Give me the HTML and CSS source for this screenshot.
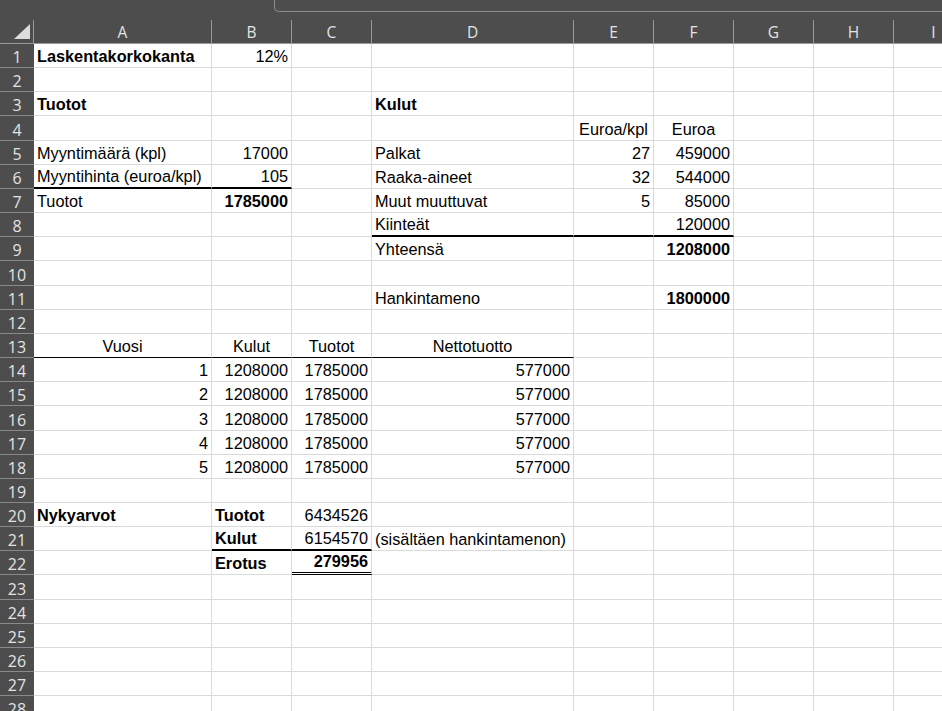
FILE: index.html
```html
<!DOCTYPE html>
<html lang="fi">
<head>
<meta charset="utf-8">
<title>Laskenta</title>
<link rel="stylesheet" href="styles.css">
</head>
<body>
<div class="topbar"><div class="namebox"></div></div>
<div class="sheet">
  <div class="corner"><svg width="34" height="23" viewBox="0 0 34 23"><polygon points="14,19 30,19 30,4" fill="#dcdcdc"/></svg></div>
  <div class="ch">A</div><div class="ch">B</div><div class="ch">C</div><div class="ch">D</div><div class="ch">E</div><div class="ch">F</div><div class="ch">G</div><div class="ch">H</div><div class="ch">I</div>

  <div class="h">1</div><div class="c b">Laskentakorkokanta</div><div class="c n">12%</div><div class="c"></div><div class="c"></div><div class="c"></div><div class="c"></div><div class="c"></div><div class="c"></div><div class="c"></div>
  <div class="h">2</div><div class="c"></div><div class="c"></div><div class="c"></div><div class="c"></div><div class="c"></div><div class="c"></div><div class="c"></div><div class="c"></div><div class="c"></div>
  <div class="h">3</div><div class="c b">Tuotot</div><div class="c"></div><div class="c"></div><div class="c b">Kulut</div><div class="c"></div><div class="c"></div><div class="c"></div><div class="c"></div><div class="c"></div>
  <div class="h">4</div><div class="c"></div><div class="c"></div><div class="c"></div><div class="c"></div><div class="c m">Euroa/kpl</div><div class="c m">Euroa</div><div class="c"></div><div class="c"></div><div class="c"></div>
  <div class="h">5</div><div class="c">Myyntimäärä (kpl)</div><div class="c n">17000</div><div class="c"></div><div class="c">Palkat</div><div class="c n">27</div><div class="c n">459000</div><div class="c"></div><div class="c"></div><div class="c"></div>
  <div class="h">6</div><div class="c tk">Myyntihinta (euroa/kpl)</div><div class="c n tk">105</div><div class="c"></div><div class="c">Raaka-aineet</div><div class="c n">32</div><div class="c n">544000</div><div class="c"></div><div class="c"></div><div class="c"></div>
  <div class="h">7</div><div class="c">Tuotot</div><div class="c n b">1785000</div><div class="c"></div><div class="c">Muut muuttuvat</div><div class="c n">5</div><div class="c n">85000</div><div class="c"></div><div class="c"></div><div class="c"></div>
  <div class="h">8</div><div class="c"></div><div class="c"></div><div class="c"></div><div class="c tk">Kiinteät</div><div class="c tk"></div><div class="c n tk">120000</div><div class="c"></div><div class="c"></div><div class="c"></div>
  <div class="h">9</div><div class="c"></div><div class="c"></div><div class="c"></div><div class="c">Yhteensä</div><div class="c"></div><div class="c n b">1208000</div><div class="c"></div><div class="c"></div><div class="c"></div>
  <div class="h">10</div><div class="c"></div><div class="c"></div><div class="c"></div><div class="c"></div><div class="c"></div><div class="c"></div><div class="c"></div><div class="c"></div><div class="c"></div>
  <div class="h">11</div><div class="c"></div><div class="c"></div><div class="c"></div><div class="c">Hankintameno</div><div class="c"></div><div class="c n b">1800000</div><div class="c"></div><div class="c"></div><div class="c"></div>
  <div class="h">12</div><div class="c"></div><div class="c"></div><div class="c"></div><div class="c"></div><div class="c"></div><div class="c"></div><div class="c"></div><div class="c"></div><div class="c"></div>
  <div class="h">13</div><div class="c m bl">Vuosi</div><div class="c m bl">Kulut</div><div class="c m bl">Tuotot</div><div class="c m bl">Nettotuotto</div><div class="c"></div><div class="c"></div><div class="c"></div><div class="c"></div><div class="c"></div>
  <div class="h">14</div><div class="c n">1</div><div class="c n">1208000</div><div class="c n">1785000</div><div class="c n">577000</div><div class="c"></div><div class="c"></div><div class="c"></div><div class="c"></div><div class="c"></div>
  <div class="h">15</div><div class="c n">2</div><div class="c n">1208000</div><div class="c n">1785000</div><div class="c n">577000</div><div class="c"></div><div class="c"></div><div class="c"></div><div class="c"></div><div class="c"></div>
  <div class="h">16</div><div class="c n">3</div><div class="c n">1208000</div><div class="c n">1785000</div><div class="c n">577000</div><div class="c"></div><div class="c"></div><div class="c"></div><div class="c"></div><div class="c"></div>
  <div class="h">17</div><div class="c n">4</div><div class="c n">1208000</div><div class="c n">1785000</div><div class="c n">577000</div><div class="c"></div><div class="c"></div><div class="c"></div><div class="c"></div><div class="c"></div>
  <div class="h">18</div><div class="c n">5</div><div class="c n">1208000</div><div class="c n">1785000</div><div class="c n">577000</div><div class="c"></div><div class="c"></div><div class="c"></div><div class="c"></div><div class="c"></div>
  <div class="h">19</div><div class="c"></div><div class="c"></div><div class="c"></div><div class="c"></div><div class="c"></div><div class="c"></div><div class="c"></div><div class="c"></div><div class="c"></div>
  <div class="h">20</div><div class="c b">Nykyarvot</div><div class="c b">Tuotot</div><div class="c n">6434526</div><div class="c"></div><div class="c"></div><div class="c"></div><div class="c"></div><div class="c"></div><div class="c"></div>
  <div class="h">21</div><div class="c"></div><div class="c b tk">Kulut</div><div class="c n tk">6154570</div><div class="c">(sisältäen hankintamenon)</div><div class="c"></div><div class="c"></div><div class="c"></div><div class="c"></div><div class="c"></div>
  <div class="h">22</div><div class="c"></div><div class="c b">Erotus</div><div class="c n b dbl">279956</div><div class="c"></div><div class="c"></div><div class="c"></div><div class="c"></div><div class="c"></div><div class="c"></div>
  <div class="h">23</div><div class="c"></div><div class="c"></div><div class="c"></div><div class="c"></div><div class="c"></div><div class="c"></div><div class="c"></div><div class="c"></div><div class="c"></div>
  <div class="h">24</div><div class="c"></div><div class="c"></div><div class="c"></div><div class="c"></div><div class="c"></div><div class="c"></div><div class="c"></div><div class="c"></div><div class="c"></div>
  <div class="h">25</div><div class="c"></div><div class="c"></div><div class="c"></div><div class="c"></div><div class="c"></div><div class="c"></div><div class="c"></div><div class="c"></div><div class="c"></div>
  <div class="h">26</div><div class="c"></div><div class="c"></div><div class="c"></div><div class="c"></div><div class="c"></div><div class="c"></div><div class="c"></div><div class="c"></div><div class="c"></div>
  <div class="h">27</div><div class="c"></div><div class="c"></div><div class="c"></div><div class="c"></div><div class="c"></div><div class="c"></div><div class="c"></div><div class="c"></div><div class="c"></div>
  <div class="h">28</div><div class="c"></div><div class="c"></div><div class="c"></div><div class="c"></div><div class="c"></div><div class="c"></div><div class="c"></div><div class="c"></div><div class="c"></div>
</div>
</body>
</html>
```

FILE: styles.css
```css
html, body {
  margin: 0;
  padding: 0;
  overflow: hidden;
  background: #ffffff;
  width: 942px;
  height: 711px;
}

.topbar {
  height: 20px;
  background: #4d4d4d;
  padding-left: 274px;
  box-sizing: border-box;
}

.namebox {
  height: 12px;
  box-sizing: border-box;
  border: 1px solid #8e8e8e;
  border-top: none;
  border-right: none;
  border-bottom-left-radius: 5px;
}

.sheet {
  display: grid;
  grid-template-columns: 34px 178px 80px 80px 202px 80px 80px 80px 80px 80px;
  grid-template-rows: 24px;
  grid-auto-rows: 24.16px;
  width: 974px;
}

.corner {
  background: #4d4d4d;
  border-right: 1px solid #9a9a9a;
  border-bottom: 1px solid #9a9a9a;
  box-sizing: border-box;
}

.corner svg {
  display: block;
}

.ch {
  background: #4d4d4d;
  color: #e3e3e3;
  border-right: 1px solid #9a9a9a;
  border-bottom: 1px solid #9a9a9a;
  box-sizing: border-box;
  display: flex;
  align-items: center;
  justify-content: center;
  font-family: "Open Sans", "Noto Sans", sans-serif;
  font-size: 15.5px;
  line-height: 18px;
  padding-top: 1px;
}

.h {
  background: #4d4d4d;
  color: #e3e3e3;
  border-bottom: 1px solid #8a8a8a;
  box-sizing: border-box;
  display: flex;
  align-items: flex-end;
  justify-content: center;
  font-family: "Open Sans", "Noto Sans", sans-serif;
  font-size: 16px;
  line-height: 18px;
  padding-bottom: 1px;
}

.c {
  border-right: 1px solid #dadada;
  border-bottom: 1px solid #dadada;
  box-sizing: border-box;
  display: flex;
  align-items: flex-end;
  padding: 0 3px 2px 3px;
  white-space: nowrap;
  font-family: "Liberation Sans", Arial, sans-serif;
  font-size: 16.3px;
  line-height: 18px;
  color: #000000;
}

.n {
  justify-content: flex-end;
}

.m {
  justify-content: center;
}

.b {
  font-weight: bold;
}

.bl {
  border-bottom-color: #000000;
}

.tk {
  border-bottom: 2px solid #000000;
}

.dbl {
  border-bottom: 3px double #000000;
}
```
